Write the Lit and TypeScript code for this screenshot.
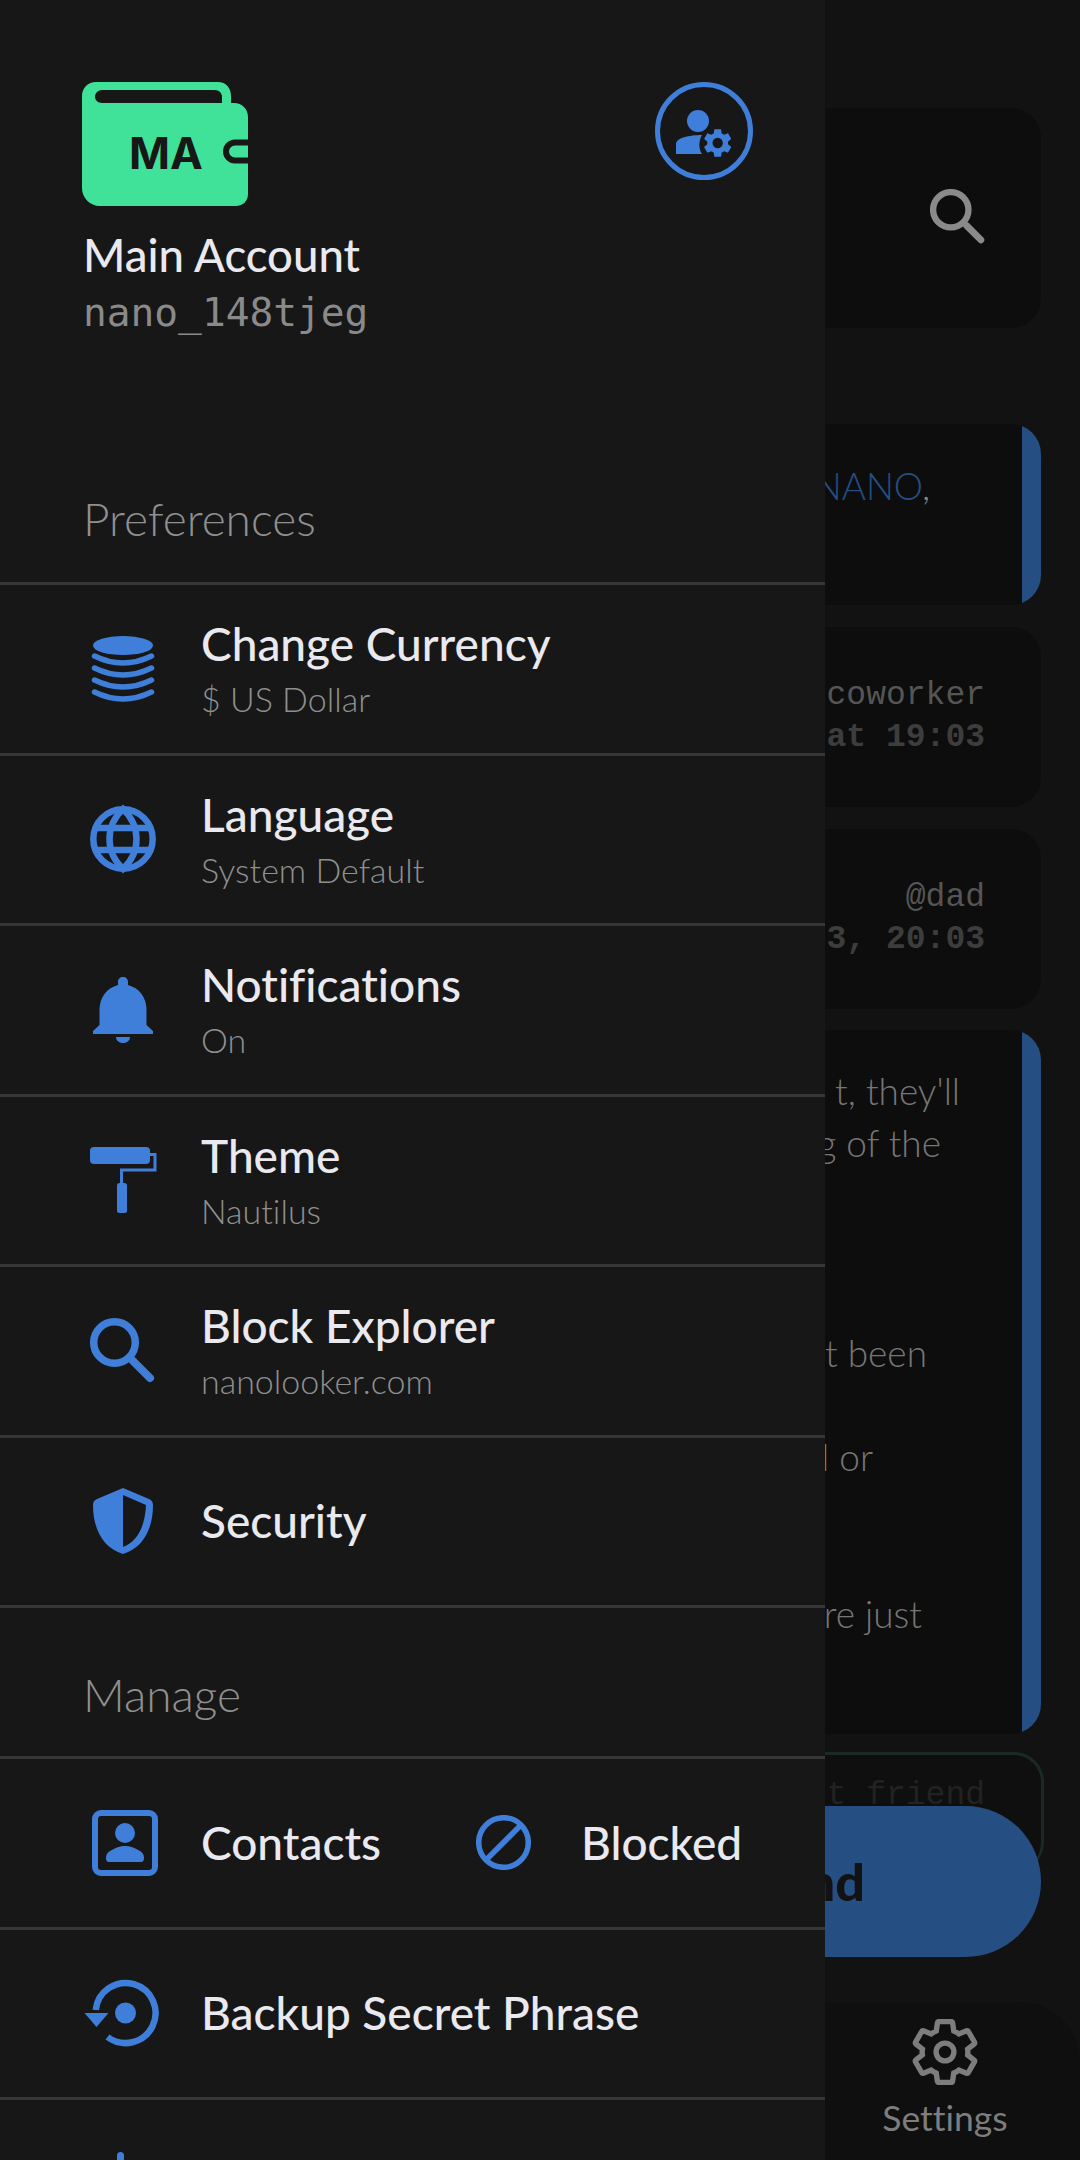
import { LitElement, css, html, svg } from "lit";
import { customElement } from "lit/decorators.js";

const crescent = (b: number) =>
  svg`<path d="M1.500 ${b - 7}Q30 ${b + 7} 58.500 ${b - 7}" fill="none" stroke="currentColor" stroke-width="5.500" stroke-linecap="round"/>`;

const icons = {
  stack: svg`<ellipse cx="30" cy="9.500" rx="30" ry="9.500"/>${[27, 39, 51, 63].map(crescent)}`,
  globe: svg`<g fill="none" stroke="currentColor" stroke-width="6.500"><circle cx="33" cy="33" r="29.700"/><path d="M33 3C15 20 15 46 33 63C51 46 51 20 33 3z"/><path d="M5 22h56M5 44h56"/></g>`,
  bell: svg`<path d="M30 0c3 0 5 2 5 5v3c11 3 18.500 12 18.500 25v15L60 54v3H0v-3l6.500-6V33C6.500 20 14 11 25 8V5c0-3 2-5 5-5z"/><path d="M23 60h14c0 3.500-3 6-7 6s-7-2.500-7-6z"/>`,
  roller: svg`<rect x="0" y="0" width="60" height="17" rx="4"/><path d="M60 7.500h5v15.500H31.500V38" fill="none" stroke="currentColor" stroke-width="3"/><rect x="27" y="36" width="10" height="30" rx="2.500"/>`,
  search: svg`<g fill="none" stroke="currentColor" stroke-linecap="round"><circle cx="24.500" cy="24.500" r="20.800" stroke-width="7.500"/><path d="M43 43l17 17" stroke-width="8"/></g>`,
  shield: svg`<path fill-rule="evenodd" d="M30 0l26 11c2.500 1 4 3 4 6 0 24-10 43-30 49C10 60 0 41 0 17c0-3 1.500-5 4-6L30 0zm0 7v52c14-5 22-20 23-42z"/>`,
  contact: svg`<rect x="3" y="3" width="60" height="60" rx="6" fill="none" stroke="currentColor" stroke-width="6"/><circle cx="33" cy="23" r="10"/><path d="M14 48c0-4 2-6 5-7.500 4-2.500 9-4.500 14-4.500s10 2 14 4.500c3 1.500 5 3.500 5 7.500 0 2.500-1 4-3 4H17c-2 0-3-1.500-3-4z"/>`,
  blocked: svg`<g fill="none" stroke="currentColor" stroke-width="5.500"><circle cx="27.500" cy="27.500" r="24.800"/><path d="M10 45L45 10"/></g>`,
  backup: svg`<circle cx="41" cy="33" r="10.500"/><path d="M11.200 30A30 30 0 1 1 23 57" fill="none" stroke="currentColor" stroke-width="6.500"/><path d="M0 33h24L12 47z"/>`,
};

const gearPath =
  "M19.140 12.940c.04-.3.06-.61.06-.94 0-.32-.02-.64-.07-.94l2.030-1.580c.18-.14.23-.41.12-.61l-1.920-3.320c-.12-.22-.37-.29-.59-.22l-2.390.96c-.5-.38-1.030-.7-1.620-.94l-.36-2.540c-.04-.24-.24-.41-.48-.41h-3.840c-.24 0-.43.17-.47.41l-.36 2.540c-.59.24-1.130.57-1.620.94l-2.390-.96c-.22-.08-.47 0-.59.22L2.740 8.870c-.12.21-.08.47.12.61l2.030 1.580c-.05.3-.09.63-.09.94s.02.64.07.94l-2.030 1.580c-.18.14-.23.41-.12.61l1.920 3.320c.12.22.37.29.59.22l2.390-.96c.5.38 1.030.7 1.620.94l.36 2.540c.05.24.24.41.48.41h3.840c.24 0 .44-.17.47-.41l.36-2.540c.59-.24 1.130-.56 1.620-.94l2.390.96c.22.08.47 0 .59-.22l1.920-3.320c.12-.22.07-.47-.12-.61l-2.010-1.580z";

@customElement("app-root")
export class AppRoot extends LitElement {
  static styles = css`
    :host {
      display: block;
      position: relative;
      width: 1080px;
      height: 2160px;
      overflow: hidden;
      background: #121212;
      font-family: "Lato", sans-serif;
      font-variant-ligatures: none;
    }
    .page {
      display: flex;
      flex-direction: column;
      align-items: flex-end;
      height: 2160px;
      padding-right: 39px;
      box-sizing: border-box;
      color: #8a8a8a;
    }
    .card {
      width: 640px;
      box-sizing: border-box;
      background: #0d0d0d;
      border-radius: 30px;
      overflow: hidden;
      display: flex;
      flex-direction: column;
      align-items: flex-end;
      flex: none;
    }
    .search {
      height: 220px;
      margin-top: 108px;
      justify-content: center;
      padding-right: 55px;
      padding-bottom: 3px;
      color: #8a8a8a;
    }
    .search svg { width: 56px; height: 56px; }
    .tip {
      background: linear-gradient(to left, #254e82 19px, #0d0d0d 19px);
      font-size: 37px;
      font-weight: 300;
      color: #767676;
    }
    .tip1 {
      height: 181px;
      margin-top: 96px;
      padding: 39px 111px 0 0;
      color: #888;
    }
    .tip1 b { font-weight: 300; color: #254e82; }
    .tip2 { height: 704px; margin-top: 21px; align-items: stretch; }
    .tip2 div { height: 52px; line-height: 52px; text-align: right; }
    .l1 { margin-top: 35px; padding-right: 81px; }
    .l2 { padding-right: 100px; }
    .l3 { margin-top: 158px; padding-right: 114px; }
    .l4 { margin-top: 52px; padding-right: 168px; }
    .l5 { margin-top: 105px; padding-right: 119px; }
    .mono {
      height: 180px;
      margin-top: 22px;
      padding-right: 56px;
      justify-content: center;
      font-family: "Liberation Mono", monospace;
      font-size: 33px;
      line-height: 42px;
      color: #555;
    }
    .mono b { color: #3d3d3d; }
    .friend {
      height: 120px;
      margin-top: 18px;
      margin-right: -3px;
      width: 643px;
      background: #0f0f0f;
      border: 3px solid #1a2b26;
      border-bottom: 0;
      padding: 22px 56px 0 0;
      font-family: "Liberation Mono", monospace;
      font-size: 33px;
      color: #222;
    }
    .send {
      width: 640px;
      height: 151px;
      margin-top: -66px;
      background: #254e82;
      border-radius: 76px;
      flex: none;
      font-size: 52px;
      font-weight: 900;
      color: #121212;
      text-align: right;
      line-height: 151px;
      padding-right: 176px;
      box-sizing: border-box;
      position: relative;
    }
    .nav {
      width: 640px;
      margin: 45px -39px 0 0;
      padding-right: 39px;
      flex: 1;
      background: #0f0f0f;
      border-radius: 0 60px 0 0;
      display: flex;
      flex-direction: column;
      align-items: flex-end;
    }
    .tab {
      width: 192px;
      display: flex;
      flex-direction: column;
      align-items: center;
      gap: 11px;
      padding-top: 17px;
      font-size: 35.500px;
      color: #7d7d7d;
    }
    .tab svg { width: 66px; height: 66px; display: block; }
    .drawer {
      position: absolute;
      left: 0;
      top: 0;
      width: 825px;
      height: 2160px;
      overflow: hidden;
      background: #171717;
      color: #e9e9ef;
    }
    .head {
      display: flex;
      justify-content: space-between;
      align-items: flex-start;
      padding: 81px 71px 0 82px;
    }
    .wallet { width: 166px; height: 124px; margin-top: 1px; display: block; }
    .gear { width: 100px; height: 100px; display: block; }
    .name {
      margin: 23px 0 0 83px;
      font-size: 45.500px;
      line-height: 52px;
      font-weight: 500;
    }
    .addr {
      margin: 6px 0 0 83px;
      font-family: "DejaVu Sans Mono", monospace;
      font-size: 39.500px;
      line-height: 50px;
      color: #8a8a8a;
    }
    .label {
      padding-left: 83px;
      font-size: 46px;
      line-height: 60px;
      font-weight: 300;
      color: #8f8f8f;
      border-bottom: 3px solid #363636;
    }
    .prefs { margin-top: 152px; padding-bottom: 33px; }
    .manage { padding-top: 57px; padding-bottom: 31px; }
    .row {
      display: flex;
      align-items: center;
      height: 170.500px;
      box-sizing: border-box;
      border-bottom: 3px solid #363636;
    }
    .icon {
      width: 80px;
      flex: none;
      margin: 0 38px 0 83px;
      color: #3f7fda;
      display: flex;
      justify-content: center;
    }
    .icon svg { display: block; overflow: visible; }
    .title {
      font-size: 46px;
      line-height: 52px;
      font-weight: 500;
    }
    .sub {
      font-size: 34px;
      line-height: 40px;
      margin-top: 9px;
      font-weight: 300;
      color: #8f8f8f;
    }
    .pair { flex: none; width: 476px; display: flex; align-items: center; }
    .pair2 { display: flex; align-items: center; gap: 50px; color: #3f7fda; }
    .pair2 span { color: #e9e9ef; }
    .stub { width: 7px; height: 30px; margin: 52px 0 0 117px; border-radius: 4px 4px 0 0; background: #3f7fda; }
  `;

  row(icon: unknown, w: number, h: number, title: string, sub?: string, shift = 0) {
    return html`<div class="row">
      <div class="icon"><svg viewBox="${shift} 0 ${w} ${h}" width=${w} height=${h} fill="currentColor">${icon}</svg></div>
      <div>
        <div class="title">${title}</div>
        ${sub ? html`<div class="sub">${sub}</div>` : ""}
      </div>
    </div>`;
  }

  render() {
    return html`
      <div class="page">
        <div class="card search">
          <svg viewBox="0 0 66 66" fill="currentColor">${icons.search}</svg>
        </div>
        <div class="card tip tip1"><span><b>NANO</b>,</span></div>
        <div class="card mono"><span>coworker</span><b>at 19:03</b></div>
        <div class="card mono"><span>@dad</span><b>3, 20:03</b></div>
        <div class="card tip tip2">
          <div class="l1">t, they'll</div>
          <div class="l2">g of the</div>
          <div class="l3">t been</div>
          <div class="l4">d or</div>
          <div class="l5">re just</div>
        </div>
        <div class="card friend">t friend</div>
        <div class="send">nd</div>
        <div class="nav">
          <div class="tab">
            <svg viewBox="1.600 1.600 20.800 20.800" fill="none" stroke="currentColor" stroke-width="1.700">
              <circle cx="12" cy="12" r="2.800"/>
              <path d=${gearPath}/>
            </svg>
            <span>Settings</span>
          </div>
        </div>
      </div>
      <div class="drawer">
        <div class="head">
          <svg class="wallet" viewBox="0 0 166 124">
            <path fill="#40e299" d="M0 14C0 6 6 0 14 0h122c8 0 13 6 13 14v7h3c8 0 14 6 14 14v77c0 7-5 12-12 12H18C8 124 0 116 0 106z"/>
            <path fill="#171717" d="M13 15c0-4 3-7 7-7h113c4 0 7 3 7 7v6H20c-4 0-7-3-7-6z"/>
            <path fill="none" stroke="#171717" stroke-width="6" d="M166 60.500h-13a9 9 0 0 0 0 18h13"/>
            <text x="47" y="87" font-family="Inter, sans-serif" font-size="44" font-weight="700" fill="#171717">MA</text>
          </svg>
          <svg class="gear" viewBox="0 0 100 100">
            <circle cx="50" cy="50" r="46.500" fill="none" stroke="#3f7fda" stroke-width="5"/>
            <g fill="#3f7fda">
              <circle cx="44" cy="40" r="11"/>
              <path d="M22 73V63c0-6 13-9 26-9-3 5-4 13 0 19z"/>
              <path transform="translate(46.400 44.700) scale(1.440)" fill-rule="evenodd" d="${gearPath}M12 15.600a3.600 3.600 0 1 0 0-7.200 3.600 3.600 0 0 0 0 7.200z"/>
            </g>
          </svg>
        </div>
        <div class="name">Main Account</div>
        <div class="addr">nano_148tjeg</div>
        <div class="label prefs">Preferences</div>
        ${this.row(icons.stack, 60, 66, "Change Currency", "$ US Dollar")}
        ${this.row(icons.globe, 66, 66, "Language", "System Default")}
        ${this.row(icons.bell, 60, 66, "Notifications", "On")}
        ${this.row(icons.roller, 67, 66, "Theme", "Nautilus")}
        ${this.row(icons.search, 66, 66, "Block Explorer", "nanolooker.com")}
        ${this.row(icons.shield, 60, 66, "Security")}
        <div class="label manage">Manage</div>
        <div class="row">
          <div class="pair">
            <div class="icon"><svg viewBox="-2 0 66 66" width="66" height="66" fill="currentColor">${icons.contact}</svg></div>
            <div class="title">Contacts</div>
          </div>
          <div class="pair2">
            <svg viewBox="0 0 55 55" width="55" height="55" fill="currentColor">${icons.blocked}</svg>
            <span class="title">Blocked</span>
          </div>
        </div>
        ${this.row(icons.backup, 74, 66, "Backup Secret Phrase", undefined, 1.5)}
        <div class="stub"></div>
      </div>
    `;
  }
}
